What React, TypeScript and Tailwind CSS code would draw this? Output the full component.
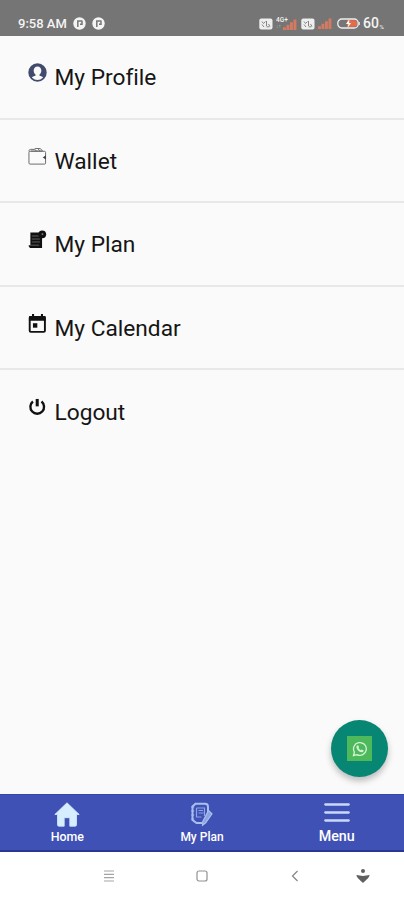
import React from 'react';

function ProfileIcon() {
  return (
    <svg className="h-[19px] w-[19px]" viewBox="0 0 20 20">
      <circle cx="10" cy="10" r="8.8" fill="#fafafa" stroke="#414b6e" strokeWidth="1.8" />
      <path d="M10 1.400A8.600 8.600 0 0 0 3.600 15.700c1.100-1.200 2.600-1.700 4.300-2.200v-1.300C6.600 11.200 6 9.700 6 8c0-2.700 1.500-4.400 4-4.400S14 5.300 14 8c0 1.700-.6 3.200-1.900 4.200v1.300c1.700.5 3.200 1 4.300 2.200A8.600 8.600 0 0 0 10 1.400z" fill="#414b6e" />
    </svg>
  );
}

function WalletIcon() {
  return (
    <svg className="h-[19px] w-[19px]" viewBox="0 0 20 20" fill="none" stroke="#666" strokeWidth="1">
      <rect x="1" y="4.500" width="17.500" height="13.500" rx="1.200" />
      <path d="M1 4.500c0-1.200.5-2 1.700-2h3.800l1.600-1 5 .2 2.400 2.800M3 4.300h12M7 2.500l2 1.500M10.500 2l2 2" />
      <path d="M18.800 8.800l-3.300 2.200 3.300 2.200z" fill="#444" stroke="none" />
    </svg>
  );
}

function PlanIcon() {
  return (
    <svg className="h-[19px] w-[19px]" viewBox="0 0 20 20">
      <path d="M2.500 2.500h9.500l2.800 5.500v11H3.500C1.700 19 .7 17.800.7 16h1.800z" fill="#111" />
      <path d="M4 6.300h7.500M4 9.500h8.500M4 12.600h8.500M2.300 16h9.500" stroke="#777" strokeWidth=".8" />
      <circle cx="15" cy="4.600" r="4.100" fill="#111" />
      <circle cx="15.200" cy="4.300" r="1" fill="#888" />
    </svg>
  );
}

function CalendarIcon() {
  return (
    <svg className="h-[19px] w-[19px]" viewBox="0 0 20 20">
      <path d="M5.300 0v3M14.700 0v3" stroke="#111" strokeWidth="2.200" />
      <rect x="1.800" y="3" width="16" height="15.800" rx="1.200" fill="none" stroke="#111" strokeWidth="2" />
      <path d="M1 3.200c0-.8.400-1.200 1.200-1.200h15.200c.8 0 1.200.4 1.200 1.200V7H1z" fill="#111" />
      <path d="M5.200 9.700h4.600v4.700H5.200z" fill="#111" />
    </svg>
  );
}

function LogoutIcon() {
  return (
    <svg className="h-[19px] w-[19px]" viewBox="0 0 20 20" fill="none" stroke="#111" strokeWidth="2.500">
      <path d="M5.200 3.700a7.200 7.200 0 1 0 9 0" />
      <path d="M9.700 1v7.800" strokeWidth="3.200" />
    </svg>
  );
}

const menuItems = [
  { label: 'My Profile', icon: <ProfileIcon /> },
  { label: 'Wallet', icon: <WalletIcon /> },
  { label: 'My Plan', icon: <PlanIcon /> },
  { label: 'My Calendar', icon: <CalendarIcon /> },
  { label: 'Logout', icon: <LogoutIcon /> },
];

function AppBadge() {
  return (
    <svg className="h-[13px] w-[13px]" viewBox="0 0 13 13">
      <circle cx="6.500" cy="6.500" r="6.200" fill="#f4f4f4" />
      <path d="M4.800 10V4h4.700M9 4.200v3H7" fill="none" stroke="#777" strokeWidth="1.500" />
    </svg>
  );
}

function VolteIcon() {
  return (
    <svg className="h-3 w-[14px]" viewBox="0 0 14 12">
      <rect x=".3" y=".5" width="13.200" height="11" rx="2" fill="#eee" />
      <path d="M3 3.500l1.500 2 2-2M3 6.500l2 2.500M7.500 3v5M9.500 6l1.500 2.500M7.500 8.800h3" fill="none" stroke="#858585" strokeWidth="1" />
    </svg>
  );
}

function SignalIcon() {
  return (
    <svg className="h-[11px] w-[14px]" viewBox="0 0 14 11">
      <path d="M0 8.200h2.900V11H0zM3.500 5.800h2.900V11H3.500zM7 3.300h2.900V11H7zM10.500.5h2.900V11h-2.900z" fill="#d67961" />
    </svg>
  );
}

function StatusBar() {
  return (
    <header className="flex h-[35.5px] shrink-0 items-start bg-[#757575] pt-[17px] text-[#f4f4f4]">
      <div className="flex h-[13px] items-center pl-[18px]">
        <span className="w-[55px] whitespace-nowrap text-[13px] leading-[13px] font-medium">9:58 AM</span>
        <AppBadge />
        <span className="w-[6px]" />
        <AppBadge />
      </div>
      <div className="ml-auto flex h-[13px] items-center pr-[20px]">
        <VolteIcon />
        <div className="ml-[3px] flex h-[13px] w-[21px] items-end">
          <div className="flex w-[7px] flex-col self-start">
            <span className="whitespace-nowrap text-[6.5px] leading-[6px] font-medium">4G+</span>
            <span className="text-[5px] leading-[6px] text-[#bbb]">↓↑</span>
          </div>
          <SignalIcon />
        </div>
        <span className="w-[4px]" />
        <VolteIcon />
        <span className="w-[3px]" />
        <SignalIcon />
        <svg className="ml-[5px] h-[11px] w-[23px]" viewBox="0 0 23 11">
          <rect x=".8" y="1" width="20.400" height="9" rx="4" fill="none" stroke="#eee" strokeWidth="1.300" />
          <path d="M10 2.200h7.500a2.500 2.500 0 0 1 2.500 2.500v1.600a2.500 2.500 0 0 1-2.500 2.500H10z" fill="#e66b4a" />
          <path d="M12.500 1L9 6h2.500L10.500 10 14 5h-2z" fill="#fff" />
          <path d="M22.300 4v3" stroke="#eee" />
        </svg>
        <span className="ml-[3px] w-[16.500px] text-[14px] leading-[13px] font-medium">60</span>
        <span className="self-end text-[6px] leading-[7px]">%</span>
      </div>
    </header>
  );
}

function WhatsAppButton() {
  return (
    <button className="absolute top-[720px] left-[331px] flex h-[57px] w-[57px] items-center justify-center rounded-full bg-[#078674] shadow-[0_4px_6px_rgba(0,0,0,0.25)]">
      <span className="flex h-[25px] w-[25px] items-center justify-center bg-[#4db95b]">
        <svg className="h-4 w-4" viewBox="0 0 16 16">
          <path d="M1.500 14.500l.9-3.300A6.400 6.400 0 1 1 4.900 13.600z" fill="none" stroke="#d3f3d7" strokeWidth="1.300" />
          <path d="M5.200 4.400l1-.2.900 2-.6.900c.5 1 1.300 1.700 2.300 2.200l.9-.9 2 1c-.1 1.200-1 1.800-2.100 1.800-2.700-.3-5-2.600-5.200-5 0-.8.300-1.400.8-1.800z" fill="#d3f3d7" />
        </svg>
      </span>
    </button>
  );
}

function BottomTabs() {
  return (
    <nav className="grid h-[58px] shrink-0 grid-cols-3 border-t border-b-2 border-t-[#3546ad] border-b-[#283796] bg-[#3f51b5] text-[12px] text-white">
      <div className="flex flex-col items-center pt-[7px]">
        <svg className="h-[25px] w-[26px]" viewBox="0 0 26 25">
          <path d="M13 .8L.8 12.500h2.700v10.300c0 .9.500 1.400 1.400 1.400h5.300v-8.500h5.600v8.500h5.300c.9 0 1.400-.5 1.400-1.400V12.500h2.700z" fill="#d5edff" stroke="#d5edff" strokeWidth=".8" strokeLinejoin="round" />
        </svg>
        <span className="mt-[3px] text-[12.4px] leading-[14px] font-medium">Home</span>
      </div>
      <div className="flex flex-col items-center pt-[7px]">
        <svg className="h-[25px] w-[24px]" viewBox="0 0 24 25" fill="none" stroke="#a9bff0" strokeWidth="2">
          <path d="M12 21H6.500L2.500 18V4.500L5.500 1.800H15c1.800 0 3 1.200 3 3v12" />
          <path d="M1.200 5h3M1.200 9h3M1.200 13h3M1.200 17h3" strokeWidth="1.200" />
          <path d="M6.500 6h8v8M6.500 6v9h5M8.500 8.500h4.500M8.500 11h5" strokeWidth="1.200" stroke="#8ea4e3" />
          <path d="M18.500 8.500l3.500 3.300-6.500 9.200-3 2.300.3-4z" fill="#8ea4e3" strokeWidth="1.200" />
        </svg>
        <span className="mt-[3px] leading-[14px] font-medium">My Plan</span>
      </div>
      <div className="flex flex-col items-center pt-[7px]">
        <svg className="h-[22px] w-[26px]" viewBox="0 0 26 22">
          <path d="M1.300 2.500h23.400M1.300 10.500h23.400M1.300 18.500h23.400" stroke="#c9d9fb" strokeWidth="2.300" strokeLinecap="round" />
        </svg>
        <span className="mt-[4px] text-[14.3px] leading-[16px] font-medium">Menu</span>
      </div>
    </nav>
  );
}

function SystemNav() {
  return (
    <footer className="flex h-[48px] shrink-0 items-center bg-white pl-[103px]">
      <svg className="h-3 w-3" viewBox="0 0 12 12">
        <path d="M1 1h10M1 4.300h10M1 7.600h10M1 11h10" stroke="#a5a5a5" strokeWidth="1.200" />
      </svg>
      <svg className="ml-[81px] h-3 w-3" viewBox="0 0 12 12">
        <rect x="1" y="1" width="10" height="10" rx="2" fill="none" stroke="#929292" strokeWidth="1.200" />
      </svg>
      <svg className="ml-[83px] h-3 w-2" viewBox="0 0 8 12">
        <path d="M6.500 1L1.500 6l5 5" fill="none" stroke="#858585" strokeWidth="1.200" />
      </svg>
      <svg className="ml-[57px] h-[14px] w-[14px]" viewBox="0 0 14 14">
        <circle cx="7" cy="2" r="2" fill="#606060" />
        <path d="M.5 6c2-.1 3.800 1 6.500 1s4.500-1.100 6.500-1c0 2.500-3 4.500-6.500 8C3.500 10.500.5 8.500.5 6z" fill="#606060" />
      </svg>
    </footer>
  );
}

export default function App() {
  return (
    <div className="relative flex h-[900px] w-[404px] flex-col overflow-hidden bg-[#fafafa] font-['Roboto',sans-serif]">
      <StatusBar />
      <main className="flex-1 pt-[0.5px]">
        {menuItems.map((item) => (
          <div
            key={item.label}
            className="flex h-[83.6px] items-start border-b-2 border-[#e8e8e8] pl-[28px] pt-[27.3px] last:border-b-0"
          >
            {item.icon}
            <span className="ml-[7.500px] text-[22.7px] leading-[29px] text-[#151515] [font-variant-ligatures:none]">
              {item.label}
            </span>
          </div>
        ))}
      </main>
      <BottomTabs />
      <SystemNav />
      <WhatsAppButton />
    </div>
  );
}
